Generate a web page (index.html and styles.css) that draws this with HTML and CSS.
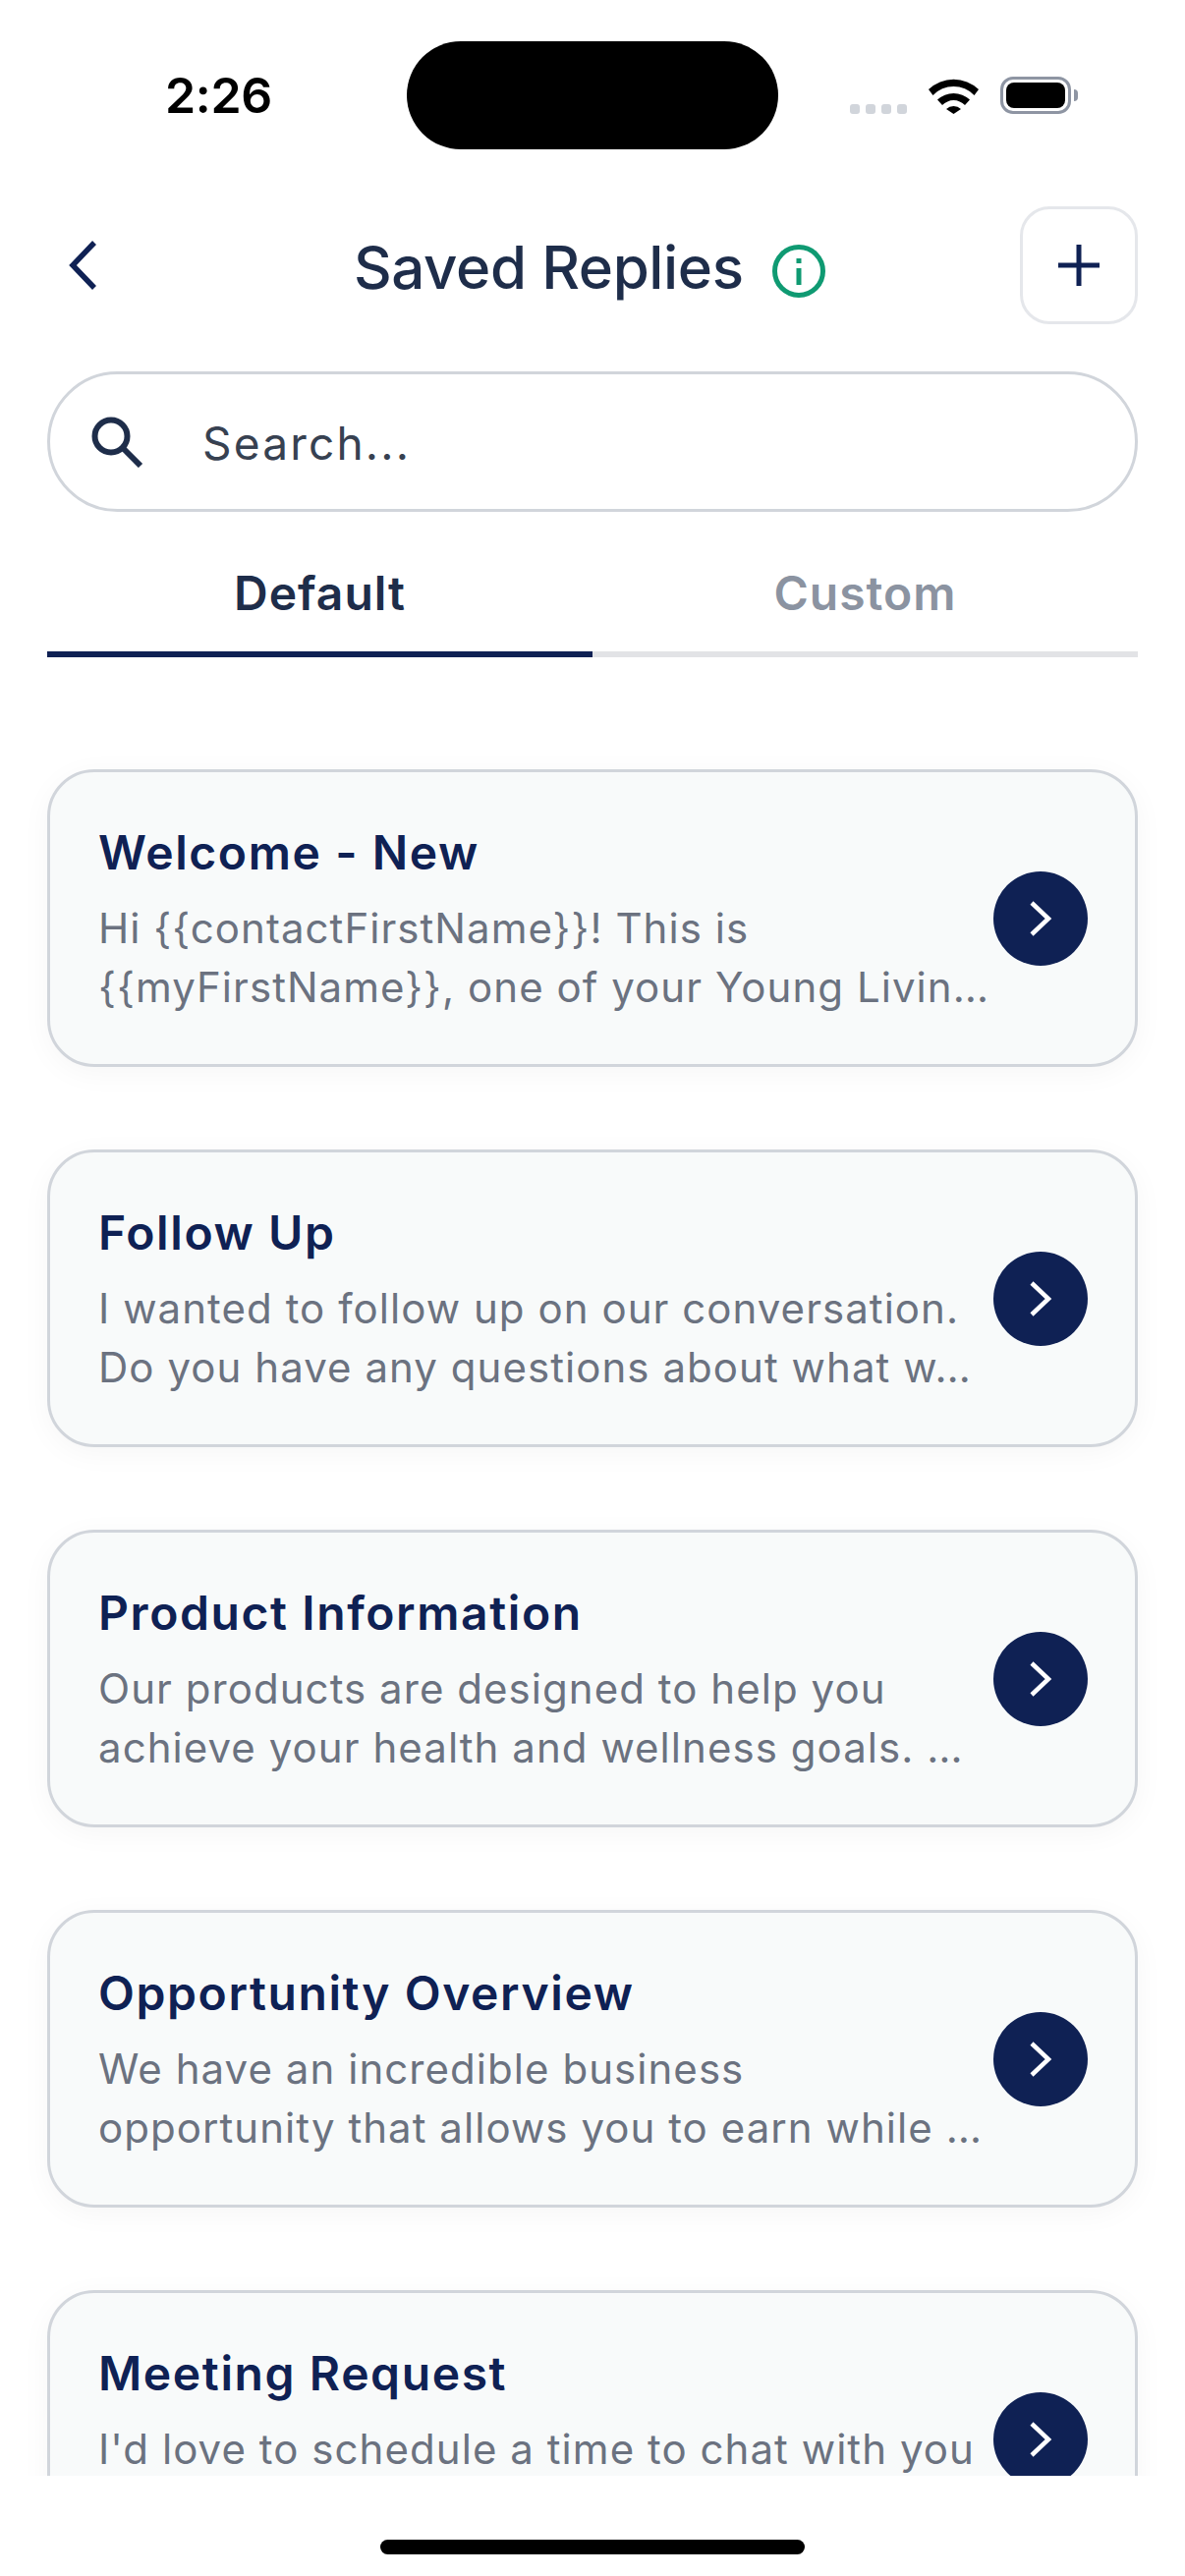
FILE: index.html
```html
<!DOCTYPE html>
<html lang="en">
<head>
    <meta charset="UTF-8">
    <meta name="viewport" content="width=device-width, initial-scale=1.0">
    <title>Saved Replies</title>
    <link rel="stylesheet" href="styles.css">
</head>
<body>
    <div class="screen">
        <div class="status-bar">
            <div class="time">2:26</div>
            <div class="island"></div>
            <div class="status-icons">
                <div class="signal"><span></span><span></span><span></span><span></span></div>
                <svg class="wifi" viewBox="0 0 51 38">
                    <path d="M0 13 A37 37 0 0 1 51 13 L46.500 19 A29 29 0 0 0 4.500 19 Z" fill="#000"/>
                    <path d="M9 23.500 A24 24 0 0 1 42 23.500 L37 29 A16 16 0 0 0 14 29 Z" fill="#000"/>
                    <path d="M18 33 A11 11 0 0 1 33 33 L25.500 38 Z" fill="#000"/>
                </svg>
                <div class="battery"><div class="battery-fill"></div></div>
                <div class="battery-tip"></div>
            </div>
        </div>

        <div class="header">
            <svg class="back" viewBox="0 0 30 52">
                <path d="M26 3 L4 26 L26 49" fill="none" stroke="#0f2154" stroke-width="5.500"/>
            </svg>
            <div class="title-wrap">
                <h1>Saved Replies</h1>
                <svg class="info" viewBox="0 0 54 54">
                    <circle cx="27" cy="27" r="24.500" fill="none" stroke="#0f9a72" stroke-width="5"/>
                    <rect x="24.500" y="24" width="5" height="17" fill="#0f9a72"/>
                    <rect x="24.500" y="14" width="5" height="5" fill="#0f9a72"/>
                </svg>
            </div>
            <button class="add-btn">
                <svg viewBox="0 0 42 42">
                    <path d="M21 0 V42 M0 21 H42" stroke="#0f2154" stroke-width="5"/>
                </svg>
            </button>
        </div>

        <div class="search">
            <svg class="search-icon" viewBox="0 0 53 52">
                <circle cx="20" cy="20" r="16.500" fill="none" stroke="#1e2d4a" stroke-width="6"/>
                <path d="M32 32 L50 50" stroke="#1e2d4a" stroke-width="6"/>
            </svg>
            <span class="search-text">Search...</span>
        </div>

        <div class="tabs">
            <div class="tab active">Default</div>
            <div class="tab">Custom</div>
        </div>

        <div class="list">
            <div class="card">
                <div class="card-text">
                    <div class="card-title">Welcome - New</div>
                    <p class="card-body">Hi {{contactFirstName}}! This is<br>{{myFirstName}}, one of your Young Livin…</p>
                </div>
                <div class="card-arrow"><svg viewBox="0 0 24 38"><path d="M3 3 L20 19 L3 35" fill="none" stroke="#fff" stroke-width="4.500"/></svg></div>
            </div>
            <div class="card">
                <div class="card-text">
                    <div class="card-title">Follow Up</div>
                    <p class="card-body">I wanted to follow up on our conversation.<br>Do you have any questions about what w…</p>
                </div>
                <div class="card-arrow"><svg viewBox="0 0 24 38"><path d="M3 3 L20 19 L3 35" fill="none" stroke="#fff" stroke-width="4.500"/></svg></div>
            </div>
            <div class="card">
                <div class="card-text">
                    <div class="card-title">Product Information</div>
                    <p class="card-body">Our products are designed to help you<br>achieve your health and wellness goals. …</p>
                </div>
                <div class="card-arrow"><svg viewBox="0 0 24 38"><path d="M3 3 L20 19 L3 35" fill="none" stroke="#fff" stroke-width="4.500"/></svg></div>
            </div>
            <div class="card">
                <div class="card-text">
                    <div class="card-title">Opportunity Overview</div>
                    <p class="card-body">We have an incredible business<br>opportunity that allows you to earn while …</p>
                </div>
                <div class="card-arrow"><svg viewBox="0 0 24 38"><path d="M3 3 L20 19 L3 35" fill="none" stroke="#fff" stroke-width="4.500"/></svg></div>
            </div>
            <div class="card">
                <div class="card-text">
                    <div class="card-title">Meeting Request</div>
                    <p class="card-body">I'd love to schedule a time to chat with you</p>
                </div>
                <div class="card-arrow"><svg viewBox="0 0 24 38"><path d="M3 3 L20 19 L3 35" fill="none" stroke="#fff" stroke-width="4.500"/></svg></div>
            </div>
        </div>

        <div class="home-bar"><div class="home-indicator"></div></div>
    </div>
</body>
</html>
```

FILE: styles.css
```css
* {
    margin: 0;
    padding: 0;
    box-sizing: border-box;
}

html, body {
    width: 1206px;
    height: 2622px;
    overflow: hidden;
    background: #fff;
}

body {
    font-family: Inter, "Liberation Sans", sans-serif;
}

.screen {
    display: flex;
    flex-direction: column;
    height: 2622px;
}

/* Status bar */
.status-bar {
    display: flex;
    align-items: flex-start;
    height: 210px;
    padding-top: 42px;
    flex-shrink: 0;
}

.time {
    width: 414px;
    padding: 27px 0 0 168px;
    font-size: 50px;
    line-height: 56px;
    font-weight: 600;
    letter-spacing: -0.300px;
    color: #000;
}

.island {
    width: 378px;
    height: 110px;
    border-radius: 55px;
    background: #000;
}

.status-icons {
    display: flex;
    align-items: flex-start;
    padding: 36px 0 0 73px;
}

.signal {
    display: flex;
    gap: 6px;
    margin-top: 28px;
}

.signal span {
    width: 10px;
    height: 10px;
    border-radius: 3px;
    background: #d1d5db;
}

.wifi {
    width: 51px;
    height: 38px;
    margin-left: 22px;
}

.battery {
    width: 72px;
    height: 38px;
    margin-left: 22px;
    padding: 3px;
    border: 3px solid #8e95a3;
    border-radius: 13px;
}

.battery-fill {
    width: 100%;
    height: 100%;
    background: #000;
    border-radius: 8px;
}

.battery-tip {
    width: 4px;
    height: 12px;
    margin: 13px 0 0 3px;
    background: #8e95a3;
    border-radius: 0 4px 4px 0;
}

/* Header */
.header {
    display: flex;
    align-items: center;
    height: 120px;
    padding: 0 48px 0 70px;
    flex-shrink: 0;
}

.back {
    width: 30px;
    height: 52px;
    flex-shrink: 0;
}

.title-wrap {
    display: flex;
    align-items: center;
    gap: 29px;
    margin-left: 260px;
    flex: 1;
}

h1 {
    font-size: 60px;
    font-weight: 500;
    line-height: 72px;
    letter-spacing: -0.400px;
    color: #1e2d4a;
    padding-top: 3px;
}

.info {
    width: 54px;
    height: 54px;
    margin-top: 11px;
}

.add-btn {
    display: flex;
    align-items: center;
    justify-content: center;
    width: 120px;
    height: 120px;
    background: #fff;
    border: 3px solid #e5e7eb;
    border-radius: 30px;
}

.add-btn svg {
    width: 42px;
    height: 42px;
}

/* Search */
.search {
    display: flex;
    align-items: center;
    height: 143px;
    margin: 48px 48px 0;
    padding: 0 0 0 42px;
    border: 3px solid #d1d5db;
    border-radius: 72px;
    flex-shrink: 0;
}

.search-icon {
    width: 53px;
    height: 52px;
}

.search-text {
    margin-left: 60px;
    padding-top: 3px;
    font-size: 46px;
    letter-spacing: 2.200px;
    color: #374151;
}

/* Tabs */
.tabs {
    display: flex;
    margin: 0 48px;
    flex-shrink: 0;
}

.tab {
    flex: 1;
    height: 148px;
    padding-top: 53px;
    text-align: center;
    font-size: 48px;
    line-height: 60px;
    font-weight: 600;
    letter-spacing: 1px;
    color: #8b93a1;
    border-bottom: 6px solid #e2e3e6;
}

.tab.active {
    color: #1e2d4a;
    border-bottom-color: #0f2154;
}

/* Cards */
.list {
    flex: 1;
    min-height: 0;
    overflow: hidden;
    display: flex;
    flex-direction: column;
    gap: 84px;
    padding: 114px 48px 0;
}

.card {
    display: flex;
    align-items: center;
    height: 303px;
    flex-shrink: 0;
    padding: 0 48px 0 49px;
    background: #f8fafa;
    border: 3px solid #d1d5db;
    border-radius: 48px;
    box-shadow: 0 6px 30px rgba(0, 0, 0, 0.04);
}

.card-text {
    flex: 1;
    min-width: 0;
    height: 197px;
    padding-top: 2px;
}

.card-title {
    font-size: 48px;
    line-height: 60px;
    font-weight: 600;
    letter-spacing: 1.600px;
    color: #0f2154;
    margin-bottom: 17px;
}

.card-body {
    font-size: 42px;
    line-height: 60px;
    letter-spacing: 1.050px;
    color: #6b7280;
    white-space: nowrap;
}

.card-arrow {
    display: flex;
    align-items: center;
    justify-content: center;
    width: 96px;
    height: 96px;
    flex-shrink: 0;
    background: #0f2154;
    border-radius: 50%;
}

.card-arrow svg {
    width: 24px;
    height: 38px;
}

/* Home indicator */
.home-bar {
    display: flex;
    justify-content: center;
    height: 102px;
    padding-top: 65px;
    background: #fff;
    flex-shrink: 0;
}

.home-indicator {
    width: 432px;
    height: 15px;
    background: #000;
    border-radius: 8px;
}
```
